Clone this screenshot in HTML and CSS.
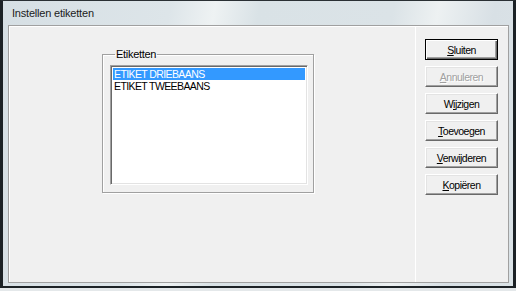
FILE: index.html
```html
<!DOCTYPE html>
<html lang="nl">
<head>
    <meta charset="UTF-8">
    <title>Instellen etiketten</title>
    <link rel="stylesheet" href="styles.css">
</head>
<body>
    <div class="window">
        <div class="titlebar">Instellen etiketten</div>
        <div class="client">
            <div class="main">
                <fieldset class="group">
                    <legend>Etiketten</legend>
                    <ul class="listbox">
                        <li class="selected">ETIKET DRIEBAANS</li>
                        <li>ETIKET TWEEBAANS</li>
                    </ul>
                </fieldset>
            </div>
            <div class="side">
                <button class="btn default"><u>S</u>luiten</button>
                <button class="btn" disabled><u>A</u>nnuleren</button>
                <button class="btn">W<u>i</u>jzigen</button>
                <button class="btn"><u>T</u>oevoegen</button>
                <button class="btn"><u>V</u>erwijderen</button>
                <button class="btn"><u>K</u>opiëren</button>
            </div>
        </div>
    </div>
</body>
</html>
```

FILE: styles.css
```css
* {
    margin: 0;
    padding: 0;
    box-sizing: border-box;
}

body {
    width: 516px;
    height: 291px;
    background-color: #e4e8ea;
    font-family: 'Liberation Sans', Arial, sans-serif;
    overflow: hidden;
}

.window {
    width: 516px;
    height: 288px;
    display: flex;
    flex-direction: column;
    border: 3px solid #1c2226;
    border-top: 1px solid #2a3034;
    border-bottom: 2px solid #1c2226;
    padding: 0 4px 3px 5px;
    background: linear-gradient(100deg, #d6dfe4 0%, #dde5e9 30%, #eef2f3 38%, #d9e2e6 46%, #dbe3e7 70%, #edf1f2 78%, #d8e0e5 88%, #dbe3e7 100%);
}

.titlebar {
    height: 24px;
    padding: 6px 0 0 4px;
    font-size: 11px;
    letter-spacing: -0.2px;
    color: #1b1b1b;
}

.client {
    flex: 1;
    display: flex;
    background-color: #f0f0f0;
    border: 1px solid #a0a0a0;
    box-shadow: inset 1px 1px 0 #ffffff;
}

.main {
    width: 407px;
    border-right: 1px solid #ffffff;
    padding: 22px 0 0 93px;
}

.group {
    width: 212px;
    height: 145px;
    border: 1px solid #a0a0a0;
    box-shadow: inset 1px 1px 0 #ffffff, 1px 1px 0 #ffffff;
    padding: 4px 0 0 7px;
}

.group legend {
    font-size: 11px;
    line-height: 13px;
    letter-spacing: -0.3px;
    color: #000000;
    margin-left: 5px;
    padding: 0 1px;
}

.listbox {
    list-style: none;
    width: 198px;
    height: 120px;
    background-color: #ffffff;
    border-top: 1px solid #a0a0a0;
    border-left: 1px solid #a0a0a0;
    border-right: 1px solid #ffffff;
    border-bottom: 1px solid #ffffff;
    box-shadow: inset 1px 1px 0 #696969, inset -1px -1px 0 #e3e3e3;
    padding: 2px 2px;
    font-size: 10.5px;
    letter-spacing: -0.6px;
}

.listbox li {
    height: 12px;
    line-height: 12px;
    padding-left: 1px;
    color: #000000;
}

.listbox li.selected {
    background-color: #3399ff;
    color: #ffffff;
}

.side {
    flex: 1;
    display: flex;
    flex-direction: column;
    gap: 6px;
    padding: 13px 0 0 9px;
}

.btn {
    width: 73px;
    height: 21px;
    font-family: 'Liberation Sans', Arial, sans-serif;
    font-size: 10.5px;
    letter-spacing: -0.5px;
    color: #000000;
    background-color: #f0f0f0;
    border: 1px solid;
    border-color: #ffffff #696969 #696969 #ffffff;
    box-shadow: inset -1px -1px 0 #a0a0a0, inset 1px 1px 0 #e3e3e3;
}

.btn.default {
    border: 1px solid #000000;
    box-shadow: inset 1px 1px 0 #ffffff, inset -1px -1px 0 #696969, inset -2px -2px 0 #a0a0a0;
}

.btn:disabled {
    color: #a0a0a0;
    text-shadow: 1px 1px 0 #ffffff;
}
```
